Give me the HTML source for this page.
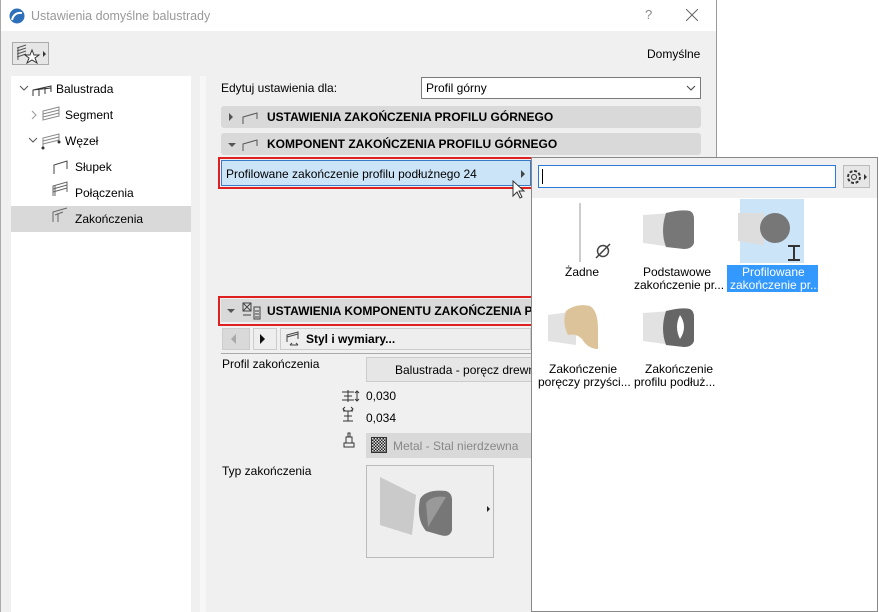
<!DOCTYPE html>
<html><head><meta charset="utf-8"><style>
*{box-sizing:border-box;margin:0;padding:0}
body{width:879px;height:612px;overflow:hidden;background:#fff;font-family:"Liberation Sans",sans-serif;font-size:12px;color:#000;position:relative}
.a{position:absolute}
.t{position:absolute;white-space:nowrap;line-height:14px}
.b{font-weight:bold}
</style></head><body>
<div class="a" style="left:0;top:0;width:717px;height:612px;background:#f0f0f0;border-right:1px solid #999;border-left:1px solid #aaa"></div>
<div class="a" style="left:1px;top:0;width:715px;height:31px;background:#fff"></div>
<svg class="a" style="left:9px;top:8px" width="16" height="16"><circle cx="8" cy="8" r="7.5" fill="#2d6fb8"/><path d="M3 12 Q5 4 13 5" stroke="#fff" stroke-width="2" fill="none"/></svg>
<div class="t" style="left:31px;top:9px;color:#999;font-size:12.5px">Ustawienia domyślne balustrady</div>
<div class="t" style="left:645px;top:8px;color:#888;font-size:13px">?</div>
<svg class="a" style="left:686px;top:9px" width="12" height="12"><path d="M0 0L12 12M12 0L0 12" stroke="#666" stroke-width="1"/></svg>
<div class="a" style="left:12px;top:42px;width:37px;height:23px;border:1px solid #aaa;background:#e6e6e6"></div>
<svg class="a" style="left:14px;top:44px" width="34" height="20"><path d="M3 4L12 1M3 7L12 4M3 10L12 7M3 13L12 10M4 4V16" stroke="#555" fill="none"/><path d="M18 6L20 11L25 11L21 14L23 19L18 16L13 19L15 14L11 11L16 11Z" stroke="#333" fill="#fff"/><path d="M29 7L32 10L29 13Z" fill="#333"/></svg>
<div class="t" style="left:647px;top:47px">Domyślne</div>
<div class="a" style="left:11px;top:76px;width:180px;height:536px;background:#fff"></div>
<div class="a" style="left:200px;top:76px;width:6px;height:536px;background:#f7f7f7"></div>
<div class="a" style="left:11px;top:206px;width:180px;height:26px;background:#d9d9d9"></div>
<svg class="a" style="left:11px;top:76px" width="180" height="160">
<path d="M9 10L13 14L17 10" stroke="#555" fill="none"/>
<path d="M22 20L22 14L40 10L40 16M28 13V20M34 11V18M22 14L40 12" stroke="#333" fill="none"/>
<path d="M21 35L25 39L21 43" stroke="#999" fill="none"/>
<path d="M32 44L32 35L48 31L48 40ZM32 38L48 34M32 41L48 37" stroke="#888" fill="none"/>
<path d="M18 62L22 66L26 62" stroke="#555" fill="none"/>
<path d="M32 72L32 62L48 58L48 66M32 65L48 61M32 68L48 64" stroke="#888" fill="none"/><circle cx="32" cy="72" r="1.5" fill="#333"/><circle cx="48" cy="66" r="1.5" fill="#333"/>
<path d="M43 98V89L56 85V93" stroke="#444" fill="none"/>
<path d="M42 120V110L56 106V116M44 110V120M42 113L56 109M42 116L56 112" stroke="#666" fill="none"/>
<path d="M42 146V136L56 132M44 139L52 136M47 146V138" stroke="#666" fill="none"/>
</svg>
<div class="t" style="left:56px;top:82px">Balustrada</div>
<div class="t" style="left:65px;top:108px">Segment</div>
<div class="t" style="left:65px;top:134px">Węzeł</div>
<div class="t" style="left:75px;top:160px">Słupek</div>
<div class="t" style="left:75px;top:186px">Połączenia</div>
<div class="t" style="left:75px;top:212px">Zakończenia</div>
<div class="t" style="left:221px;top:81px">Edytuj ustawienia dla:</div>
<div class="a" style="left:421px;top:77px;width:280px;height:22px;background:#fff;border:1px solid #7a7a7a"></div>
<div class="t" style="left:426px;top:81px">Profil górny</div>
<svg class="a" style="left:686px;top:85px" width="10" height="6"><path d="M1 1L5 5L9 1" stroke="#444" fill="none"/></svg>
<div class="a" style="left:221px;top:106px;width:480px;height:22px;background:#d9d9d9;border-radius:3px"></div>
<div class="a" style="left:221px;top:133px;width:480px;height:22px;background:#d9d9d9;border-radius:3px"></div>
<svg class="a" style="left:225px;top:106px" width="40" height="50"><path d="M4 7L8 11L4 15Z" fill="#555"/><path d="M18 18V11L32 7V13" stroke="#555" fill="none"/><path d="M3 37L11 37L7 41Z" fill="#555"/><path d="M18 45V38L32 34V40" stroke="#555" fill="none"/></svg>
<div class="t b" style="left:267px;top:110px">USTAWIENIA ZAKOŃCZENIA PROFILU GÓRNEGO</div>
<div class="t b" style="left:267px;top:137px">KOMPONENT ZAKOŃCZENIA PROFILU GÓRNEGO</div>
<div class="a" style="left:218px;top:157px;width:316px;height:32px;border:2px solid #e02020"></div>
<div class="a" style="left:221px;top:160px;width:310px;height:26px;background:#cce4f7;border:1px solid #3a7bc8"></div>
<div class="t" style="left:226px;top:167px">Profilowane zakończenie profilu podłużnego 24</div>
<svg class="a" style="left:508px;top:165px" width="24" height="36"><path d="M13 5L17 9L13 13Z" fill="#444"/><path d="M5 16V31L9 27L12 33L14 32L11 26L16 26Z" fill="#fff" stroke="#333"/></svg>
<div class="a" style="left:218px;top:296px;width:316px;height:30px;border:2px solid #e02020"></div>
<div class="a" style="left:221px;top:299px;width:310px;height:23px;background:#d9d9d9"></div>
<svg class="a" style="left:224px;top:300px" width="40" height="22"><path d="M3 9L11 9L7 13Z" fill="#555"/><path d="M19 3H27V11H19ZM19 3L27 11M27 3L19 11M30 7H36V19H30ZM31 11H35M31 14H35M31 17H35M19 15H27" stroke="#444" fill="none"/></svg>
<div class="t b" style="left:267px;top:304px">USTAWIENIA KOMPONENTU ZAKOŃCZENIA PROFI</div>
<div class="a" style="left:222px;top:328px;width:28px;height:22px;background:#d9d9d9;border:1px solid #ccc"></div>
<div class="a" style="left:253px;top:328px;width:24px;height:22px;background:#eee;border:1px solid #ccc"></div>
<div class="a" style="left:280px;top:328px;width:251px;height:22px;background:#eee;border:1px solid #ccc"></div>
<svg class="a" style="left:222px;top:328px" width="90" height="22"><path d="M14 6L9 11L14 16Z" fill="#aaa"/><path d="M38 6L43 11L38 16Z" fill="#111"/><path d="M65 14V7L76 4V11M65 9L76 6M68 17H76M68 17L70 15M76 17L74 15" stroke="#444" fill="none"/></svg>
<div class="t b" style="left:306px;top:332px">Styl i wymiary...</div>
<div class="a" style="left:221px;top:353px;width:310px;height:1px;background:#aaa"></div>
<div class="t" style="left:222px;top:357px">Profil zakończenia</div>
<div class="a" style="left:366px;top:357px;width:170px;height:25px;background:#e6e6e6;border:1px solid #ccc"></div>
<div class="t" style="left:395px;top:363px">Balustrada - poręcz drewn</div>
<svg class="a" style="left:340px;top:387px" width="22" height="66"><path d="M2 5H14M2 13H14M8 3V15M4 9H12M17 4V14M15 6L17 4L19 6M15 12L17 14L19 12" stroke="#333" fill="none"/><path d="M3 24H13M3 34H13M8 24V34M4 29H12M5 20L3 22L5 24M11 20L13 22L11 24" stroke="#333" fill="none"/><path d="M4 56H14V60H4ZM6 56V50H12V56M8 50V46H10V50" stroke="#333" fill="none"/></svg>
<div class="t" style="left:366px;top:389px">0,030</div>
<div class="t" style="left:366px;top:411px">0,034</div>
<div class="a" style="left:366px;top:433px;width:170px;height:25px;background:#d9d9d9"></div>
<div class="a" style="left:371px;top:437px;width:16px;height:16px;border:1px solid #333;background:repeating-conic-gradient(#222 0 25%,#ddd 0 50%) 0 0/3px 3px"></div>
<div class="t" style="left:393px;top:439px;color:#888">Metal - Stal nierdzewna</div>
<div class="t" style="left:222px;top:464px">Typ zakończenia</div>
<div class="a" style="left:366px;top:465px;width:128px;height:93px;background:#eee;border:1px solid #bbb"></div>
<svg class="a" style="left:366px;top:465px" width="128" height="93"><path d="M14 12L50 30L46 70L14 60Z" fill="#bbb" opacity=".7"/><path d="M54 34Q60 24 80 26Q86 28 86 35L86 65Q84 73 74 70L60 66Q50 54 54 34Z" fill="#777"/><path d="M60 38Q66 30 80 32L62 62Z" fill="#999"/><path d="M121 41L124 44L121 47Z" fill="#222"/></svg>
<div class="a" style="left:531px;top:157px;width:347px;height:455px;background:#fff;border:1px solid #888"></div>
<div class="a" style="left:532px;top:158px;width:345px;height:40px;background:#f0f0f0"></div>
<div class="a" style="left:538px;top:165px;width:298px;height:23px;background:#fff;border:1px solid #2b7bd6"></div>
<div class="a" style="left:542px;top:169px;width:1px;height:15px;background:#000"></div>
<div class="a" style="left:843px;top:165px;width:27px;height:23px;background:#e6e6e6;border:1px solid #bbb"></div>
<svg class="a" style="left:845px;top:168px" width="24" height="18"><circle cx="9" cy="9" r="6" stroke="#333" fill="none" stroke-dasharray="3 1.7" stroke-width="2"/><circle cx="9" cy="9" r="2.5" stroke="#333" fill="none"/><path d="M19 6L22 9L19 12Z" fill="#333"/></svg>
<div class="a" style="left:740px;top:199px;width:64px;height:64px;background:#cce4f7"></div>
<div class="a" style="left:727px;top:265px;width:91px;height:27px;background:#3399ff"></div>
<svg class="a" style="left:532px;top:199px" width="345" height="160">
<path d="M48 4V63" stroke="#ccc" stroke-width="2"/><circle cx="71" cy="52" r="5.5" stroke="#444" fill="none" stroke-width="1.5"/><path d="M64 59L78 45" stroke="#444" stroke-width="1.5"/>
<path d="M111 16L140 14L140 48L111 44Z" fill="#e2e2e2"/><path d="M134 14Q150 10 158 12Q162 14 162 20L162 44Q160 50 152 50L134 48Q128 32 134 14Z" fill="#777"/>
<path d="M206 14L232 14L232 46L206 42Z" fill="#ddd"/><circle cx="243" cy="29" r="15" fill="#777"/><path d="M256 47H268M256 61H268M262 47V61" stroke="#333" stroke-width="2"/>
<path d="M16 116L44 112L44 146L16 142Z" fill="#e2e2e2"/><path d="M34 112Q44 104 58 107Q66 112 66 130L66 150Q56 150 50 140Q44 134 36 136Q30 124 34 112Z" fill="#dcc39a"/>
<path d="M111 114L140 112L140 146L111 142Z" fill="#e2e2e2"/><path d="M134 112Q150 108 158 110Q162 112 162 118L162 142Q160 148 152 148L134 146Q128 130 134 112Z" fill="#666"/><path d="M148 116Q156 128 148 140Q142 128 148 116Z" fill="#fff"/>
</svg>
<div class="t" style="left:565px;top:265px">Żadne</div>
<div class="t" style="left:643px;top:265px">Podstawowe</div>
<div class="t" style="left:634px;top:278px">zakończenie pr...</div>
<div class="t" style="left:742px;top:265px;color:#fff">Profilowane</div>
<div class="t" style="left:730px;top:278px;color:#fff">zakończenie pr...</div>
<div class="t" style="left:549px;top:362px">Zakończenie</div>
<div class="t" style="left:538px;top:375px">poręczy przyści...</div>
<div class="t" style="left:645px;top:362px">Zakończenie</div>
<div class="t" style="left:634px;top:375px">profilu podłuż...</div>
</body></html>
